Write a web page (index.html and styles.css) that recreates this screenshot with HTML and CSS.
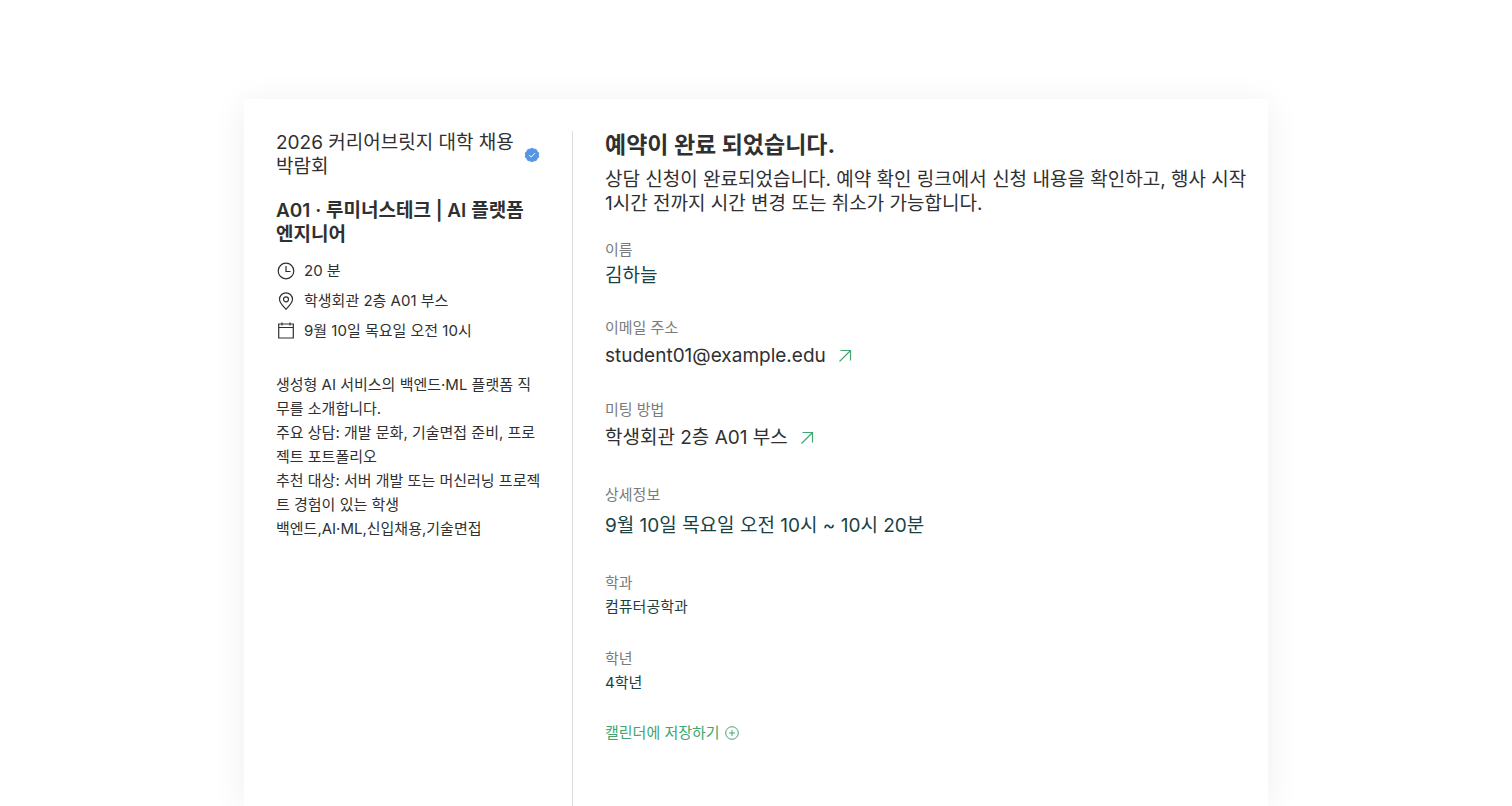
FILE: index.html
```html
<!DOCTYPE html>
<html lang="ko">
<head>
    <meta charset="UTF-8">
    <meta name="viewport" content="width=device-width, initial-scale=1.0">
    <title>예약 완료</title>
    <link rel="stylesheet" href="styles.css">
</head>
<body>
    <main class="card">
        <!-- 행사 정보 -->
        <aside class="summary">
            <div class="host">
                <p class="host-name">2026 커리어브릿지 대학 채용박람회</p>
                <svg class="badge" viewBox="0 0 16 16" aria-hidden="true">
                    <path fill="#5596e6" d="M8 1.200l1.900 1 2.200.2 1 2 1.600 1.500-.4 2.100.4 2.100-1.600 1.500-1 2-2.200.2-1.900 1-1.900-1-2.200-.2-1-2-1.600-1.500.4-2.100-.4-2.100 1.600-1.500 1-2 2.200-.2z" stroke="#5596e6" stroke-width="1" stroke-linejoin="round"/>
                    <path d="M5.200 8.200l2 1.800 3.800-3.800" fill="none" stroke="#fff" stroke-width="1"/>
                </svg>
            </div>
            <h2 class="event-title">A01 · 루미너스테크 | AI 플랫폼 엔지니어</h2>
            <ul class="meta">
                <li>
                    <svg class="icon" viewBox="0 0 20 20" aria-hidden="true">
                        <circle cx="10" cy="10" r="7.800"/>
                        <path d="M10 5V10.500H14.500"/>
                    </svg>
                    20 분
                </li>
                <li>
                    <svg class="icon" viewBox="0 0 20 20" aria-hidden="true">
                        <path d="M10 18.300C7 15.200 3.500 12 3.500 8.300a6.500 6.500 0 0 1 13 0C16.500 12 13 15.200 10 18.300z"/>
                        <circle cx="10" cy="8.300" r="2.500"/>
                    </svg>
                    학생회관 2층 A01 부스
                </li>
                <li>
                    <svg class="icon" viewBox="0 0 20 20" aria-hidden="true">
                        <path d="M2.700 3h14.600v14H2.700zM2.700 6.500h14.600M6 1.500v3M14 1.500v3"/>
                    </svg>
                    9월 10일 목요일 오전 10시
                </li>
            </ul>
            <p class="description">생성형 AI 서비스의 백엔드·ML 플랫폼 직무를 소개합니다.<br>
                주요 상담: 개발 문화, 기술면접 준비, 프로젝트 포트폴리오<br>
                추천 대상: 서버 개발 또는 머신러닝 프로젝트 경험이 있는 학생<br>
                백엔드,AI·ML,신입채용,기술면접</p>
        </aside>

        <!-- 예약 내용 -->
        <section class="detail">
            <h1>예약이 완료 되었습니다.</h1>
            <p class="notice">상담 신청이 완료되었습니다. 예약 확인 링크에서 신청 내용을 확인하고, 행사 시작 1시간 전까지 시간 변경 또는 취소가 가능합니다.</p>

            <dl class="fields">
                <div class="field">
                    <dt>이름</dt>
                    <dd class="large">김하늘</dd>
                </div>
                <div class="field">
                    <dt>이메일 주소</dt>
                    <dd class="linked">
                        <a href="mailto:student01@example.edu">student01@example.edu
                            <svg class="arrow" viewBox="0 0 14 14" aria-hidden="true"><path d="M1.500 12.500L12.500 1.500M2.500 1.500h10v10"/></svg>
                        </a>
                    </dd>
                </div>
                <div class="field">
                    <dt>미팅 방법</dt>
                    <dd class="linked">
                        <a href="#place">학생회관 2층 A01 부스
                            <svg class="arrow" viewBox="0 0 14 14" aria-hidden="true"><path d="M1.500 12.500L12.500 1.500M2.500 1.500h10v10"/></svg>
                        </a>
                    </dd>
                </div>
                <div class="field schedule">
                    <dt>상세정보</dt>
                    <dd class="large">9월 10일 목요일 오전 10시 ~ 10시 20분</dd>
                </div>
                <div class="field answer">
                    <dt>학과</dt>
                    <dd>컴퓨터공학과</dd>
                </div>
                <div class="field answer">
                    <dt>학년</dt>
                    <dd>4학년</dd>
                </div>
            </dl>

            <button class="save" type="button">캘린더에 저장하기
                <svg class="plus" viewBox="0 0 14 14" aria-hidden="true">
                    <circle cx="7" cy="7" r="6.300"/>
                    <path d="M7 4v6M4 7h6"/>
                </svg>
            </button>
        </section>
    </main>
</body>
</html>
```

FILE: styles.css
```css
* {
    box-sizing: border-box;
}

body {
    margin: 0;
    padding: 99px 24px 0;
    min-height: 100vh;
    display: flex;
    justify-content: center;
    background: #fff;
    color: #303030;
    font-family: Inter, "Noto Sans CJK KR", sans-serif;
    font-size: 15px;
    line-height: 24px;
}

h1, h2, p, ul, dl, dd {
    margin: 0;
    padding: 0;
}

.card {
    width: 100%;
    max-width: 1024px;
    display: flex;
    padding: 32px 32px 0;
    background: #fff;
    box-shadow: 0 4px 32px rgba(0, 0, 0, 0.07);
}

/* 왼쪽: 행사 요약 */
.summary {
    flex: 0 0 297px;
    padding-right: 32px;
    border-right: 1px solid #dedede;
}

.host {
    display: flex;
    align-items: center;
    justify-content: space-between;
    gap: 8px;
    margin-bottom: 20px;
}

.host-name {
    font-size: 19px;
}

.badge {
    flex: none;
    width: 16px;
    height: 16px;
}

.event-title {
    margin-bottom: 12px;
    font-size: 19px;
    font-weight: 600;
}

.meta {
    list-style: none;
    display: flex;
    flex-direction: column;
    gap: 6px;
    margin-bottom: 30px;
}

.meta li {
    display: flex;
    align-items: center;
    gap: 8px;
}

.icon {
    width: 20px;
    height: 20px;
    fill: none;
    stroke: #303030;
    stroke-width: 1.2;
}

.description {
    margin-right: -2px;
}

/* 오른쪽: 예약 상세 */
.detail {
    flex: 1;
    padding-left: 32px;
}

h1 {
    margin-bottom: 9px;
    font-size: 23px;
    line-height: 28px;
    font-weight: 700;
}

.notice {
    margin-right: -12px;
    margin-bottom: 24px;
    font-size: 19px;
}

.field {
    margin-bottom: 28px;
}

.field dt {
    margin-bottom: 2px;
    color: #7b7b7b;
    line-height: 20px;
}

.field dd {
    color: #1b4242;
}

.field .large {
    font-size: 19px;
    line-height: 28px;
}

.field .linked {
    display: flex;
}

.linked a {
    display: inline-flex;
    align-items: center;
    gap: 12px;
    color: #303030;
    font-size: 19px;
    line-height: 32px;
    text-decoration: none;
}

.arrow {
    width: 14px;
    height: 14px;
    fill: none;
    stroke: #41a66f;
    stroke-width: 1.2;
}

.schedule {
    padding-top: 3px;
}

.field.schedule .large {
    line-height: 38px;
}

.field.answer {
    margin-bottom: 30px;
}

.save {
    display: flex;
    align-items: center;
    gap: 5px;
    margin-top: -4px;
    padding: 0;
    border: 0;
    background: none;
    color: #41a66f;
    font: inherit;
    cursor: pointer;
}

.plus {
    width: 14px;
    height: 14px;
    fill: none;
    stroke: #41a66f;
}
```
